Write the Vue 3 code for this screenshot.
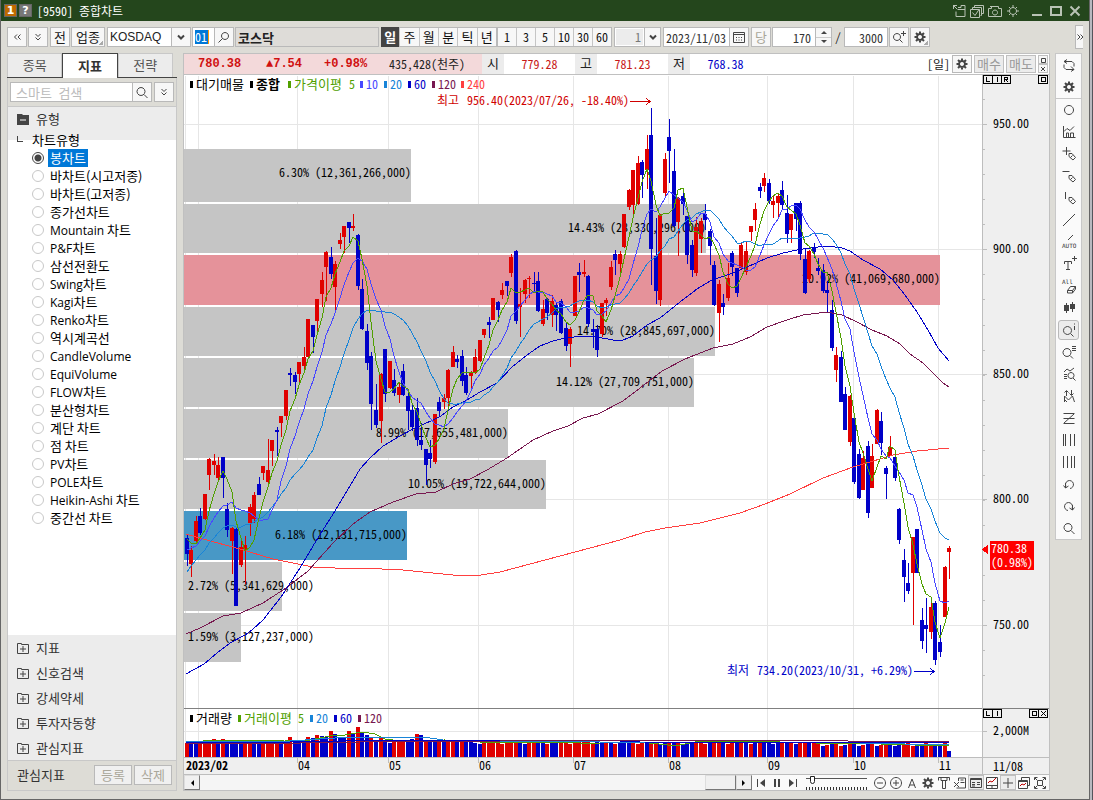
<script setup>
import { ref } from 'vue'

const chartTypes = ['봉차트', '바차트(시고저종)', '바차트(고저종)', '종가선차트', 'Mountain 차트', 'P&F차트', '삼선전환도', 'Swing차트', 'Kagi차트', 'Renko차트', '역시계곡선', 'CandleVolume', 'EquiVolume', 'FLOW차트', '분산형차트', '계단 차트', '점 차트', 'PV차트', 'POLE차트', 'Heikin-Ashi 차트', '중간선 차트'].map((name) => {
  const [, latin, rest] = name.match(/^([A-Za-z&-]*)(.*)$/)
  return { name, latin, rest }
})
const selected = ref('봉차트')
const groups = ['지표', '신호검색', '강세약세', '투자자동향', '관심지표']
const periods = ['일', '주', '월', '분', '틱', '년']
const minutes = ['1', '3', '5', '10', '30', '60']
const code = ref('01')
const stock = ref('코스닥')
const unit = ref('1')
const date = ref('2023/11/03')
const count = ref('170')
const total = ref('3000')
const keyword = ref('')
const zoomLevel = ref(8)
const quotes = [
  { label: '시', value: '779.28', tone: 'up' },
  { label: '고', value: '781.23', tone: 'up' },
  { label: '저', value: '768.38', tone: 'down' },
]

// Icons on a 16 x 16 grid: d is stroked, f is filled
const gear = { d: 'M8 5a3 3 0 1 0 .01 0M8 2.5v2M8 11.5v2M2.5 8h2M11.5 8h2M4 4l1.5 1.5M10.5 10.5L12 12M4 12l1.5-1.5M10.5 5.5L12 4', w: 2 }
const lens = 'M7 3.5a4 4 0 1 0 .01 0M10 10.5l3.5 3.5'
const pencil = 'M8 7.5h3l3.500 4-2.500 2.500-4-3.500zM11.500 9.500l-2 2'
const titleIcons = [
  { name: '창 이동', d: 'M2.5 2.5l4 4M2 2.5h4M2.5 2v4M7 4.5h3v-2h4v11h-9v-5M7 6.5h7' },
  { name: '창 복사', d: 'M5.5 4v-1.5h9v8h-2M3.5 6v-1.5h9v8h-1M1.5 6.5h9v8h-9zM3.5 9.5l2.5 3 4-6' },
  { name: '화면 저장', d: 'M1.5 5.5h3v-2h7v2h3v8h-13zM8 7a2.5 2.5 0 1 0 .01 0M3 3.5h2' },
  { name: '설정', d: 'M8 4.5a3.5 3.5 0 1 0 .01 0M8 2v2.5M8 11.5v2.5M2 8h2.5M11.5 8h2.5M4 4l1.5 1.5M10.5 10.5L12 12M4 12l1.5-1.5M10.5 5.5L12 4' },
]
const rail = [
  { name: '새로고침', d: 'M6 2.5l-3 2 3 2M3 4.5h8l2 2v3M10 9.5l3 3-3 2M13 12.5h-8l-2-2v-3' },
  { name: '환경설정', ...gear },
  { name: '원', d: 'M8 3.5a4.500 4.500 0 1 0 .01 0' },
  { name: '차트비교', d: 'M2.500 2v11.500h12M5.500 13v-4h2v4M9.500 13v-4h3v4M3 7.500l3-3 3 2 4-4' },
  { name: '추가', d: 'M5.500 1v8M1.500 5h8' + pencil },
  { name: '수평선', d: 'M1.500 3.500h7' + pencil },
  { name: '수직선', d: 'M4.500 2v7' + pencil },
  { name: '추세선', d: 'M2 14L14 2' },
  { name: '자동추세선', d: 'M7 6L12 1', t: 'AUTO', ty: 14, tx: 1 },
  { name: '문자', d: 'M3.500 8v-2.500h7v2.500M7 5.500v8.500M5 13.500h4M13.500 0v5M11 2.500h5' },
  { name: '모두 지우기', d: 'M6.500 12.500l3-4h5l-3 4zM6.500 12.500v2.500h5l3-4v-2.500M11.500 12.500v2.500', t: 'All', ty: 6, tx: 1 },
  { name: '봉 모양', d: 'M5.500 3v10M11.500 2v10', f: 'M3 5h5v6h-5zM9 4h5v5h-5z' },
  { name: '정보 보기', d: 'M6.500 4.500a4 4 0 1 0 .01 0M9.500 11.500l3 3M13.500 4v4M13.500 1.500v1', on: true },
  { name: '목록 보기', d: 'M6 4.500a4 4 0 1 0 .01 0M9 11.500l3 3M11 2.500h4M11 4.500h4M11 6.500h4' },
  { name: '차트 찾기', d: 'M3 6l3-3 3 2 4-3M3 8.500h3M3 10.500h3M3 12.500h3M10 6.500a3 3 0 1 0 .01 0M12 12l2.500 2.500' },
  { name: '패턴', d: 'M5.500 8v-5M3.500 4.500l2-2 2 2M10.500 2v5M8.500 5.500l2 2 2-2M3.500 14v-6l4 4 4-4 2 6M3 11l3 3' },
  { name: '갭', d: 'M2.500 3.500h11M2.500 8.500h11M2.500 13.500h11M13 4L3 13' },
  { name: '세로 격자', d: 'M2.500 2v12M4.500 2v12M9.500 2v12M13.500 2v12' },
  { name: '등간격', d: 'M2.500 2v12M6.500 2v12M10.500 2v12M13.500 2v12' },
  { name: '되돌리기', d: 'M5 10.500a4 4 0 1 1 4 2M4.500 7v5M2.500 9.500l2 2.500 3-2' },
  { name: '다시하기', d: 'M11 10.500a4 4 0 1 0-4 2M11.500 7v5M13.500 9.500l-2 2.500-3-2' },
  { name: '확대', d: lens },
]
const bottomTools = [
  { name: '축소', d: 'M8 2.500a5.500 5.500 0 1 0 .01 0M5 8h6' },
  { name: '확대', d: 'M8 2.500a5.500 5.500 0 1 0 .01 0M5 8h6M8 5v6' },
  { name: '글자 크기', d: 'M4.500 13l3.500-9 3.500 9M5.500 10h5' },
  { name: '차트 설정', ...gear },
  { name: '도구', d: 'M2.500 5.500v-3h11v3M5 2.500v3h6v-3M6.500 6v7.500h3v-7.500' },
  { name: '보내기', d: 'M6.500 6v-3h7v10h-9M8.500 5h3M8.500 7.500h4M2 7l5 5M7 7l-5 5' },
  { name: '데이터 창', d: 'M2.500 3.500h11v9h-11zM2 4.500h12M4 7.500h3M4 9.500h3M9 7.500h3M9 9.500h3M4 11h3', on: true },
  { name: '차트 배치', d: 'M2.500 2.500h11v11h-11zM2.500 10.500h11M8 10v3', r: 'M4 8l2-2 2 1 4-4' },
  { name: '십자선', d: 'M8 3v10M3 8h10', on: true },
  { name: '복제', d: 'M5.500 5v-2.500h8v8h-2M2.500 5.500h9v8h-9zM3 6.500h8', r: 'M4 11l2-2 2 1 2-2' },
  { name: '전체화면', d: 'M2.500 5v-2.500h3M10.500 2.500h3v2.500M13.500 11v2.500h-3M5.500 13.500h-3v-2.500M5.500 5.500h5v5h-5zM3 3l2 2M13 3l-2 2M3 13l2-2M13 13l-2-2' },
]

// Candles: direction, high, body top, body bottom, low
const candles = `B 535 538 554 566|R 546 550 564 577|R 516 521 541 542|B 508 516 533 535|R 494 494 519 520|R 458 459 475 490|R 454 461 465 475|R 457 465 478 481|B 457 457 478 498|B 503 509 530 537|R 527 528 541 574|B 528 529 606 606|R 539 547 565 567|R 536 545 549 584|R 504 507 523 536|R 492 495 519 523|B 477 484 495 495|R 466 466 473 480|R 439 470 482 485|R 440 440 451 466|B 427 430 432 456|R 416 416 423 437|R 390 390 416 420|B 368 373 375 386|B 372 375 382 394|R 362 362 374 382|R 347 357 366 371|R 319 319 357 357|B 325 325 337 353|R 299 299 321 332|R 272 280 294 307|R 251 252 267 301|B 247 257 274 279|R 261 264 287 312|R 233 240 244 249|R 226 226 237 253|B 222 222 228 243|R 214 226 228 231|B 234 235 286 290|B 279 289 329 330|B 324 331 363 370|B 352 356 404 430|B 384 410 425 428|R 373 374 421 443|B 349 349 394 402|R 361 361 388 389|B 369 380 393 396|R 382 387 395 403|B 364 371 395 396|B 391 396 411 430|B 403 410 427 431|B 398 408 440 446|B 423 440 445 450|B 449 449 465 485|B 440 453 459 468|R 414 414 462 464|B 397 402 411 416|R 394 398 402 409|R 369 370 398 411|R 346 352 367 367|B 355 359 362 368|B 350 356 381 386|B 367 375 393 395|R 371 372 376 389|R 349 357 373 374|R 340 340 361 362|R 329 329 335 338|B 317 322 325 338|R 298 298 320 320|B 301 302 310 322|R 283 290 295 299|B 281 281 286 296|R 254 257 273 277|B 250 251 321 324|R 288 304 307 337|R 279 280 294 303|R 276 278 279 298|B 272 283 284 291|B 272 281 311 312|R 300 309 324 326|B 298 299 313 320|R 295 301 315 327|B 303 305 315 331|B 299 301 333 334|B 323 328 346 351|R 327 329 344 367|R 276 276 316 316|B 263 272 275 292|R 260 272 274 277|B 275 276 324 327|B 319 329 332 348|B 325 329 350 357|R 303 303 334 337|R 298 300 303 316|R 261 267 287 290|B 250 254 260 275|R 251 254 264 273|R 214 214 247 248|R 189 190 207 210|R 170 170 205 215|R 156 163 204 205|B 160 162 175 198|R 135 149 170 189|B 108 135 249 285|B 218 256 291 304|R 214 215 300 306|R 153 159 193 197|B 119 137 151 183|B 149 171 226 227|R 197 198 222 256|B 191 196 204 215|B 216 216 255 264|B 240 245 270 277|R 217 227 273 276|R 218 221 239 253|B 204 214 220 230|B 229 231 246 265|B 261 265 305 306|R 280 284 313 342|B 294 303 307 315|R 263 278 298 301|B 251 253 267 276|B 268 268 293 297|R 243 245 268 269|R 242 251 272 275|R 226 226 232 241|R 203 209 220 231|B 183 187 191 198|R 173 178 186 192|B 179 183 201 204|R 195 201 205 218|R 194 196 203 219|B 181 190 205 209|B 195 213 234 243|R 214 214 230 243|B 203 203 219 231|B 201 203 254 260|B 249 259 293 294|R 250 251 279 283|B 243 247 252 258|B 258 268 271 275|B 264 270 291 293|B 281 290 293 312|B 300 310 348 351|R 347 355 370 382|B 351 357 402 402|B 387 394 430 430|R 395 396 442 446|B 418 418 482 484|B 449 454 498 499|R 451 458 490 490|B 441 446 513 518|R 444 456 488 488|R 409 410 444 444|B 412 421 443 455|B 466 468 474 499|R 436 447 456 456|B 453 457 478 481|B 508 509 540 544|B 549 560 577 602|B 563 583 591 594|R 537 537 573 625|B 529 529 573 573|B 608 620 641 649|B 598 625 629 653|R 600 607 632 639|B 601 603 660 665|B 625 642 652 657|R 566 567 617 617|R 546 548 552 579`
  .split('|')
  .map((row, i) => {
    const [dir, high, top, bottom, low] = row.split(' ')
    return { x: Math.round(184.5 + i * 4.512), up: dir === 'R', high: +high, top: +top, bottom: +bottom, low: +low }
  })

const closes = candles.map((c) => (c.up ? c.top : c.bottom))

// Moving average; head holds the values before the first full window
function average(n, head) {
  return closes
    .map((_, i) => {
      const y = i < head.length ? head[i] : closes.slice(i - n + 1, i + 1).reduce((a, b) => a + b, 0) / n
      return `${candles[i].x + 2},${Math.round(y)}`
    })
    .join(' ')
}

const lines = [
  { tone: 'ma240', points: '186,534 203,539 240,549 273,559 313,567 335,568 360,568 403,570 453,575 475,576 500,572 530,564 560,556 590,548 620,540 645,532 665,528 700,523 740,513 765,504 790,494 823,478 853,467 870,462 893,455 917,451 949,448' },
  { tone: 'ma120', points: '186,634 200,628 223,616 241,613 263,603 286,588 308,571 333,543 353,524 370,512 393,502 416,494 436,492 453,484 470,479 487,470 507,458 533,440 553,431 568,426 583,418 598,414 623,401 640,388 662,371 685,359 713,348 733,344 750,337 767,327 787,320 803,315 827,312 842,315 857,322 872,330 887,336 900,344 910,354 923,363 933,373 943,383 949,387' },
  { tone: 'ma60', points: '186,674 204,664 217,653 230,643 245,635 252,630 263,620 281,597 300,568 316,541 335,511 360,469 370,458 383,446 400,436 413,429 433,420 441,416 453,407 467,400 480,392 497,383 512,367 527,355 540,346 553,341 565,338 583,336 597,337 613,340 623,340 633,336 647,325 660,318 680,302 697,289 712,280 730,274 747,267 767,258 783,253 797,250 810,248 827,246 842,248 850,251 863,260 880,269 893,280 905,295 917,312 928,330 938,348 949,361' },
  { tone: 'ma20', points: average(20, [572, 566, 560, 555, 550, 543, 538, 533, 528, 526, 525, 527, 527, 525, 524, 522, 519, 517, 512]) },
  { tone: 'ma10', points: average(10, [550, 548, 546, 541, 536, 527, 518, 512, 506]) },
  { tone: 'ma5', points: average(5, [539, 543, 544, 538]) },
]

const profile = [
  { y: 149, h: 53, end: 411, label: '6.30% (12,361,266,000)' },
  { y: 204, h: 49, end: 706, label: '14.43% (28,330,296,000)' },
  { y: 255, h: 50, end: 940, label: '20.92% (41,069,680,000)', tone: 'peak' },
  { y: 307, h: 49, end: 715, label: '14.70% (28,845,697,000)' },
  { y: 358, h: 49, end: 694, label: '14.12% (27,709,751,000)' },
  { y: 409, h: 49, end: 508, label: '8.99% (17,655,481,000)' },
  { y: 460, h: 49, end: 546, label: '10.05% (19,722,644,000)' },
  { y: 511, h: 49, end: 407, label: '6.18% (12,131,715,000)', tone: 'current' },
  { y: 562, h: 49, end: 282, text: 314, label: '2.72% (5,341,629,000)' },
  { y: 613, h: 49, end: 241, text: 314, label: '1.59% (3,127,237,000)' },
]

const months = [
  { x: 297, t: '04' }, { x: 388, t: '05' }, { x: 478, t: '06' }, { x: 573, t: '07' },
  { x: 668, t: '08' }, { x: 767, t: '09' }, { x: 853, t: '10' }, { x: 938, t: '11' },
]
const prices = [
  { y: 124, t: '950.00' }, { y: 249, t: '900.00' }, { y: 374, t: '850.00' }, { y: 499, t: '800.00' }, { y: 625, t: '750.00' },
]
const minorTicks = Array.from({ length: 24 }, (_, i) => Math.round(99 + i * 25.06))

const legend = [
  { x: 190, t: '대기매물', tone: 'ink' }, { x: 250, t: '종합', tone: 'ink', bold: true },
  { x: 288, t: '가격이평', n: '5', nx: 349, tone: 'ma5' },
  { x: 360, n: '10', tone: 'ma10' }, { x: 384, n: '20', tone: 'ma20' }, { x: 408, n: '60', tone: 'ma60' },
  { x: 432, n: '120', tone: 'ma120' }, { x: 461, n: '240', tone: 'ma240' },
]
const volumeLegend = [
  { x: 190, t: '거래량', tone: 'ink' }, { x: 238, t: '거래이평', n: '5', nx: 298, tone: 'ma5' }, { x: 310, n: '20', tone: 'ma20' },
  { x: 334, n: '60', tone: 'ma60' }, { x: 358, n: '120', tone: 'ma120' },
]

const volumeColors = 'RBBRRRRBRBBBBRRBBRRRRBRRBBBRBRBBRBBBRBRBBRBRBBRRRBBRBRBBRBRRBRBBBBRRRRRRRRBBRRBBRBBRRRRRRRRBBRBRBBBRRRBRRBBRBRBBBRRRBRRBRRBRBRBRBBBBRBRBRRBRRBRBRRBRBBRBRBRRBBBRRRBBRRBBRBRB'
const volumeTops = [743, 744, 743, 743, 743, 744, 739, 740, 739, 742, 743, 743, 743, 743, 744, 743, 743, 743, 743, 740, 742, 742, 741, 737, 741, 742, 742, 737, 738, 735, 736, 737, 731, 734, 737, 737, 731, 733, 727, 732, 735, 737, 740, 738, 741, 743, 740, 740, 740, 742, 739, 734, 735, 740, 740, 740, 740, 740, 741, 741, 741, 741, 740, 741, 743, 744]
const volumes = candles.map((c, i) => {
  let top = volumeTops[i] ?? 742 + ((i * 7) % 5 === 0 ? 2 : 0)
  if (i > 140) top = 743 + ((i * 3) % 4)
  if (i === 169) top = 751
  return { x: c.x, up: volumeColors[i % volumeColors.length] === 'R', top }
})
const volumeLines = [
  { tone: 'ma5', points: '186,742 220,740 240,741 285,740 310,740 330,736 345,735 362,732 375,734 385,739 400,741 445,740 480,742 570,742 580,743 600,743 640,742 668,745 680,745 700,741 730,741 780,742 815,743 880,744 949,746' },
  { tone: 'ma20', points: '186,741 290,741 320,739 350,737 410,737 430,738 450,741 600,742 660,743 740,742 860,743 949,745' },
  { tone: 'ma60', points: '186,742 290,742 340,741 370,740 600,740 640,742 949,743' },
  { tone: 'ma120', points: '186,743 300,743 360,742 500,741 600,740 848,741 949,742' },
]
</script>

<template>
  <div class="desk">
    <main class="window">
      <header class="titlebar">
        <span class="chip chip-num">1</span>
        <button class="chip chip-help" aria-label="도움말">?</button>
        <h1>[9590] 종합차트</h1>
        <div class="title-tools">
          <button v-for="icon in titleIcons" :key="icon.name" :aria-label="icon.name">
            <svg viewBox="0 0 16 16" width="16" height="16"><path :d="icon.d" /></svg>
          </button>
          <button class="win first" aria-label="최소화"><svg viewBox="0 0 16 16" width="16" height="16"><path d="M3 12h10" class="w2" /></svg></button>
          <button class="win" aria-label="최대화"><svg viewBox="0 0 16 16" width="16" height="16"><path d="M3 4h10v8h-10z" class="w2" /></svg></button>
          <button class="win" aria-label="닫기"><svg viewBox="0 0 16 16" width="16" height="16"><path d="M3.500 3.500l9 9M12.500 3.500l-9 9" class="w2" /></svg></button>
        </div>
      </header>

      <div class="toolbar">
        <button class="tb sq" aria-label="이전"><svg viewBox="0 0 16 16" width="16" height="16"><path d="M8 5.500l-2.500 2.500 2.500 2.500M11.500 5.500l-2.500 2.500 2.500 2.500" /></svg></button>
        <button class="tb sq" aria-label="펼치기"><svg viewBox="0 0 16 16" width="16" height="16"><path d="M5.500 5l2.500 2.500 2.500-2.500M5.500 8.500l2.500 2.500 2.500-2.500" /></svg></button>
        <button class="tb sq gap1 ko">전</button>
        <button class="tb wide corner ko">업종</button>
        <label class="combo market">
          <select aria-label="시장"><option>KOSDAQ</option></select>
          <span class="drop"><svg viewBox="0 0 16 16" width="16" height="16"><path d="M5 6.500l3 3 3-3" class="w2" /></svg></span>
        </label>
        <label class="field code"><span class="hl"><input v-model="code" aria-label="종목코드" /></span></label>
        <button class="tb sq join" aria-label="종목 찾기"><svg viewBox="0 0 16 16" width="16" height="16"><path d="M9 3.500a3.500 3.500 0 1 0 .01 0M6.500 9.500l-4 4" /></svg></button>
        <input v-model="stock" class="tf name" aria-label="종목명" />
        <div class="seg periods ko">
          <button v-for="(p, i) in periods" :key="p" :class="{ on: i === 0 }">{{ p }}</button>
        </div>
        <div class="seg minutes">
          <button v-for="m in minutes" :key="m">{{ m }}</button>
        </div>
        <label class="combo unit">
          <input v-model="unit" aria-label="주기" />
          <span class="drop"><svg viewBox="0 0 16 16" width="16" height="16"><path d="M5 6.500l3 3 3-3" class="w2" /></svg></span>
        </label>
        <input v-model="date" class="tf date" aria-label="조회일" />
        <button class="tb sq join" aria-label="달력"><svg viewBox="0 0 16 16" width="16" height="16"><path d="M2.500 3.500h11v10h-11zM2 5.500h12M5 8.500h1M7.500 8.500h1M10 8.500h1M5 11h1M7.500 11h1M10 11h1" /></svg></button>
        <button class="tb sq dim gap1 ko">당</button>
        <input v-model="count" class="tf num" aria-label="표시 개수" />
        <span class="spin">
          <button aria-label="늘리기"><svg viewBox="0 0 8 4" width="8" height="4"><path d="M1 4l3-3 3 3z" /></svg></button>
          <button aria-label="줄이기"><svg viewBox="0 0 8 4" width="8" height="4"><path d="M1 0l3 3 3-3z" /></svg></button>
        </span>
        <span class="slash">/</span>
        <input v-model="total" class="tf num" aria-label="전체 개수" />
        <button class="tb sq gap1" aria-label="조회"><svg viewBox="0 0 16 16" width="16" height="16"><path d="M6 4.500a3.500 3.500 0 1 0 .01 0M8.500 10.500l3 3M12.500 2v5M10 4.500h5" /></svg></button>
        <button class="tb sq corner" aria-label="차트 설정"><svg viewBox="0 0 16 16" width="16" height="16"><path :d="gear.d" class="w2" /></svg></button>
        <button class="more" aria-label="더보기"><svg viewBox="0 0 8 16" width="8" height="16"><path d="M1.500 5.500l2.500 2.500-2.500 2.500M4.500 5.500l2.500 2.500-2.500 2.500" /></svg></button>
      </div>

      <div class="content">
        <aside class="side">
          <nav class="tabs ko">
            <button>종목</button><button class="on">지표</button><button>전략</button>
          </nav>
          <div class="panel">
            <div class="search">
              <input v-model="keyword" placeholder="스마트 검색" aria-label="스마트 검색" />
              <button class="tb sq join" aria-label="검색"><svg viewBox="0 0 16 16" width="16" height="16"><path :d="lens" /></svg></button>
              <button class="tb sq" aria-label="펼치기"><svg viewBox="0 0 16 16" width="16" height="16"><path d="M5.500 5l2.500 2.500 2.500-2.500M5.500 8.500l2.500 2.500 2.500-2.500" /></svg></button>
            </div>
            <button class="group open ko">
              <svg viewBox="0 0 12 12" width="12" height="12"><path d="M0 1h5l1 1h6v10h-12z" class="solid" /><path d="M3 7h6" class="minus" /></svg>
              유형
            </button>
            <fieldset class="tree">
              <legend>차트유형</legend>
              <label v-for="t in chartTypes" :key="t.name">
                <input v-model="selected" type="radio" name="chart-type" :value="t.name" />
                <span class="item"><span v-if="t.latin" class="latin">{{ t.latin }}</span>{{ t.rest }}</span>
              </label>
            </fieldset>
            <button v-for="g in groups" :key="g" class="group ko">
              <svg viewBox="0 0 12 12" width="12" height="12"><path d="M.5 1.500h4v1h7v9h-11zM3 7h6M6 4v6" /></svg>
              {{ g }}
            </button>
            <footer class="ko">
              <span>관심지표</span>
              <button>등록</button>
              <button>삭제</button>
            </footer>
          </div>
        </aside>

        <section class="chart">
          <div class="info">
            <div class="now">
              <b class="last">780.38</b><b class="diff">▲7.54</b><b class="rate">+0.98%</b><span class="vol">435,428(천주)</span>
            </div>
            <template v-for="q in quotes" :key="q.label">
              <span class="qlabel ko">{{ q.label }}</span>
              <span class="qvalue" :class="q.tone">{{ q.value }}</span>
            </template>
            <span class="cycle">[일]</span>
            <button class="tb sq" aria-label="정보 설정"><svg viewBox="0 0 16 16" width="16" height="16"><path :d="gear.d" class="w2" /></svg></button>
            <button class="trade ko">매수</button>
            <button class="trade ko">매도</button>
            <span class="mini">
              <button aria-label="창 크기"><svg viewBox="0 0 8 8" width="8" height="8"><path d="M2.500 2.500h4v4h-4z" /></svg></button>
              <button aria-label="창 닫기"><svg viewBox="0 0 8 8" width="8" height="8"><path d="M2 2l4 4M6 2l-4 4" /></svg></button>
            </span>
          </div>

          <svg class="plot" viewBox="184 75 865 700" preserveAspectRatio="xMinYMin meet" role="img" aria-label="코스닥 일봉 차트">
            <rect x="983" y="75" width="66" height="700" class="axis" />
            <rect x="184" y="758" width="865" height="17" class="axis" />
            <g class="grid">
              <path d="M185.500 76V757M198.500 76V757" />
              <path v-for="m in months" :key="m.t" :d="`M${m.x + 0.5} 76V757`" />
              <path v-for="p in prices" :key="p.t" :d="`M184 ${p.y + 0.5}H982`" />
              <path d="M184 731.500H982" />
            </g>
            <rect v-for="p in profile" :key="p.y" x="184" :y="p.y" :width="p.end - 184" :height="p.h" :class="['bar', p.tone]" />
            <text v-for="p in profile" :key="p.label" :x="p.text || p.end" :y="p.y + 28" text-anchor="end">{{ p.label }}</text>

            <g v-for="(c, i) in candles" :key="i" :class="c.up ? 'up' : 'down'">
              <rect :x="c.x + 2" :y="c.high" width="1" :height="c.low - c.high" />
              <rect :x="c.x" :y="c.top" width="4" :height="Math.max(1, c.bottom - c.top)" />
            </g>
            <polyline v-for="l in lines" :key="l.tone" :points="l.points" :class="['line', l.tone]" />

            <g v-for="l in legend" :key="l.x" :class="['key', l.tone]">
              <rect :x="l.x" y="81" width="3" height="7" />
              <text v-if="l.t" :x="l.x + 6" y="89" :class="['ko', { bold: l.bold }]">{{ l.t }}</text>
              <text v-if="l.n" :x="l.nx || l.x + 6" y="89">{{ l.n }}</text>
            </g>
            <g class="note high">
              <text x="437" y="105">최고</text>
              <text x="629" y="105" text-anchor="end">956.40(2023/07/26, -18.40%)</text>
              <path d="M630 101.500h20M646 98l4 3.500-4 3.500" />
            </g>
            <g class="note low">
              <text x="727" y="675">최저</text>
              <text x="913" y="675" text-anchor="end">734.20(2023/10/31, +6.29%)</text>
              <path d="M914 671.500h20M930 668l4 3.500-4 3.500" />
            </g>

            <path d="M184 708.500H1049" class="split" />
            <g v-for="l in volumeLegend" :key="l.x" :class="['key', l.tone]">
              <rect :x="l.x" y="715" width="3" height="7" />
              <text v-if="l.t" :x="l.x + 6" y="723" class="ko">{{ l.t }}</text>
              <text v-if="l.n" :x="l.nx || l.x + 6" y="723">{{ l.n }}</text>
            </g>
            <rect v-for="(v, i) in volumes" :key="i" :x="v.x" :y="v.top" width="4" :height="757 - v.top" :class="v.up ? 'up' : 'down'" />
            <polyline v-for="l in volumeLines" :key="l.tone" :points="l.points" :class="['line', l.tone]" />

            <path d="M184 757.500H1049M184 774.500H1049M982.500 75V775" class="frame" />
            <path v-for="m in months" :key="m.t" :d="`M${m.x + 0.5} 758v5`" class="frame" />
            <path v-for="y in minorTicks" :key="y" :d="`M983 ${y + 0.5}h2`" class="frame" />
            <text x="186" y="770" class="bold">2023/02</text>
            <text v-for="m in months" :key="m.t" :x="m.x + 1" y="770">{{ m.t }}</text>
            <text x="993" y="771">11/08</text>
            <g v-for="p in prices" :key="p.t">
              <path :d="`M983 ${p.y + 0.5}h4`" class="frame" />
              <text x="993" :y="p.y + 4">{{ p.t }}</text>
            </g>
            <path d="M983 731.500h4" class="frame" />
            <text x="993" y="735">2,000M</text>

            <path d="M982 549.500l6-5v10z" class="tag" />
            <rect x="990" y="541" width="44" height="29" class="tag" />
            <text x="991" y="553" class="tag-text">780.38</text>
            <text x="991" y="567" class="tag-text">(0.98%)</text>

            <g class="boxes">
              <path d="M983.500 75.500h27v8h-27zM992.500 75v8M1001.500 75v8M1038.500 75.500h9v8h-9zM1041.500 77.500h4v4h-4z" />
              <path d="M983.500 709.500h18v8h-18zM992.500 709v8M1029.500 709.500h18v8h-18zM1038.500 709v8M1032.500 711.500h4v4h-4zM1041 711l5 5M1046 711l-5 5" />
              <path d="M986.500 77v4.500h3M997.500 77v5M1004.500 82v-4.500h3v2h-3M1006 79.500l2 2.500" />
              <path d="M986.500 711v4.500h3M997.500 711v5" />
            </g>
          </svg>

          <div class="scroll">
            <button class="arrow" aria-label="왼쪽"><svg viewBox="0 0 8 8" width="8" height="8"><path d="M6 1v6l-3-3z" /></svg></button>
            <div class="track"><div class="thumb"></div></div>
            <button class="arrow" aria-label="오른쪽"><svg viewBox="0 0 8 8" width="8" height="8"><path d="M2 1v6l3-3z" /></svg></button>
            <div class="play">
              <button aria-label="처음"><svg viewBox="0 0 16 16" width="16" height="16"><path d="M4.500 4v8" /><path d="M12 4v8l-5-4z" class="solid" /></svg></button>
              <button aria-label="일시정지"><svg viewBox="0 0 16 16" width="16" height="16"><path d="M5 4h2v8h-2zM9 4h2v8h-2z" class="solid" /></svg></button>
              <button aria-label="끝"><svg viewBox="0 0 16 16" width="16" height="16"><path d="M11.500 4v8" /><path d="M4 4v8l5-4z" class="solid" /></svg></button>
            </div>
            <input v-model="zoomLevel" class="slider" type="range" min="0" max="100" aria-label="차트 간격" />
            <div class="tools">
              <button v-for="icon in bottomTools" :key="icon.name" :class="{ on: icon.on }" :aria-label="icon.name">
                <svg viewBox="0 0 16 16" width="16" height="16"><path :d="icon.d" :class="{ w2: icon.w }" /><path v-if="icon.r" :d="icon.r" class="red" /></svg>
              </button>
            </div>
          </div>
        </section>

        <nav class="rail">
          <button v-for="icon in rail" :key="icon.name" :class="{ on: icon.on }" :aria-label="icon.name">
            <svg viewBox="0 0 16 16" width="16" height="16">
              <path :d="icon.d" :class="{ w2: icon.w }" />
              <path v-if="icon.f" :d="icon.f" class="solid" />
              <text v-if="icon.t" :x="icon.tx" :y="icon.ty">{{ icon.t }}</text>
            </svg>
          </button>
        </nav>
      </div>
    </main>
  </div>
</template>

<style>
body {
  margin: 0;
  background: #f4f4f4;
}
</style>

<style scoped>
.desk {
  --mono: "Noto Sans Mono CJK KR", "Noto Sans CJK KR", monospace;
  --sans: "Noto Sans CJK KR", sans-serif;
  box-sizing: border-box;
  display: flex;
  min-height: 100vh;
  padding-bottom: 2px;
  border-right: 1px solid #55555c;
  background: #f4f4f4;
  font: 12px/16px var(--mono);
  color: #222;
}
.desk * { box-sizing: border-box; }
button, input, select { margin: 0; padding: 0; font: inherit; color: inherit; }
button { display: flex; align-items: center; justify-content: center; border: 0; background: none; white-space: nowrap; }
svg { display: block; flex: none; }
.ko { font-size: 13px; }
button path, .drop path { fill: none; stroke: #444; stroke-width: 1; }
button .w2, .drop .w2 { stroke-width: 2; }
button .solid { fill: #444; stroke: none; }
.window {
  flex: 1;
  min-width: 0;
  display: flex;
  flex-direction: column;
  border: solid #666;
  border-width: 0 1px 1px;
  margin-right: 2px;
  background: #dddcd6;
  box-shadow: 2px 0 #b9b9c0;
}
.titlebar {
  display: flex;
  align-items: center;
  height: 21px;
  padding: 0 6px 0 3px;
  background: #24461c;
  color: #fff;
}
.chip { width: 13px; height: 13px; margin-right: 2px; border: 1px solid #666; background: #777; font: bold 11px/11px "DejaVu Sans", sans-serif; text-align: center; color: #fff; }
.chip-num { background: #c06a00; }
h1 { margin: 0 0 0 3px; font: inherit; }
.title-tools { display: flex; gap: 2px; margin-left: auto; }
.title-tools path { stroke: #b9c3b5; }
.title-tools .win { margin-left: 1px; }
.title-tools .first { margin-left: 6px; }

.toolbar { display: flex; align-items: center; height: 32px; padding-left: 6px; }
.tb { height: 20px; border: 1px solid #b9b9b9; background: #f7f7f7; position: relative; flex: none; }
.sq { width: 20px; margin-right: 1px; }
.gap1 { margin-left: 1px; }
.toolbar .wide { width: 34px; margin-right: 2px; }
.dim { color: #a9a698; }
.corner::after { content: ""; position: absolute; right: 1px; bottom: 1px; width: 4px; height: 4px; background: linear-gradient(135deg, transparent 50%, #aaa 50%); }
.combo { display: flex; height: 20px; border: 1px solid #b9b9b9; background: #fff; flex: none; }
.combo select, .combo input { flex: 1; min-width: 0; border: 0; padding-left: 2px; background: #fff; appearance: none; outline: 0; border-radius: 0; }
.combo select { font: 12px "Liberation Sans", sans-serif; }
.drop { width: 19px; border-left: 1px solid #b9b9b9; display: flex; align-items: center; justify-content: center; background: #f7f7f7; }
.market { width: 84px; margin-right: 1px; }
.unit { width: 47px; margin: 0 2px; }
.unit input { background: #ececec; border: 1px solid #fff; text-align: right; padding-right: 2px; color: #777; }
.unit .drop { width: 16px; }
.field { width: 23px; height: 20px; border: 1px solid #b9b9b9; background: #fff; padding: 2px; flex: none; }
.hl { display: block; width: 14px; height: 14px; background: #0078d7; border-right: 1px solid #f90; }
.hl input { display: block; width: 100%; height: 14px; border: 0; background: none; color: #fff; outline: 0; }
.join { margin-left: -1px; }
.tf { height: 20px; border: 1px solid #b9b9b9; background: #fff; outline: 0; flex: none; color: #333; }
.name { width: 144px; padding-left: 2px; margin-right: 2px; background: #dedcd8; font: bold 13px var(--mono); color: #222; }
.date { width: 67px; padding-left: 2px; }
.num { width: 44px; padding-right: 4px; text-align: right; }
.seg { display: flex; height: 20px; border: 1px solid #b9b9b9; background: #f7f7f7; flex: none; }
.seg button { flex: 1; color: #111; }
.seg button + button { border-left: 1px solid #c5c5c5; }
.seg .on { background: #444; color: #fff; font-weight: bold; margin: -1px 0 -1px -1px; }
.periods { width: 116px; }
.minutes { width: 115px; }
.spin { display: flex; flex-direction: column; width: 16px; height: 20px; border: 1px solid #b9b9b9; border-left: 0; background: #f7f7f7; flex: none; }
.spin button { flex: 1; }
.spin button + button { border-top: 1px solid #ccc; }
.spin path { fill: #444; stroke: none; }
.slash { width: 12px; text-align: center; }
.more { width: 8px; height: 24px; margin: 0 6px 0 auto; border: 1px solid #b9b9b9; border-right: 0; background: #f7f7f7; }

.content { flex: 1; display: flex; padding: 0 7px 8px 6px; min-height: 0; }
.side { width: 170px; margin-right: 6px; display: flex; flex-direction: column; flex: none; color: #333; }
.tabs { display: flex; height: 25px; border-bottom: 1px solid #444; padding-right: 4px; }
.tabs button { flex: 1; border: 1px solid #c8c8c8; border-bottom: 0; background: #ececec; color: #555; padding-bottom: 1px; }
.tabs .on { border-color: #444; background: #fff; margin-bottom: -1px; font-weight: bold; color: #333; }
.panel { flex: 1; display: flex; flex-direction: column; border: 1px solid #c8c8c8; border-top: 0; background: #ececec; }
.search { display: flex; height: 28px; padding: 4px 2px 0; background: #dddcd6; }
.search input { flex: 1; min-width: 0; height: 20px; border: 1px solid #b9b9b9; padding-left: 5px; background: #fff; outline: 0; font-size: 13px; }
.search input::placeholder { color: #bbb; opacity: 1; }
.search .sq { margin-right: 2px; }
.search .sq:last-child { margin-right: 0; }
.group { height: 25px; justify-content: flex-start; gap: 7px; padding-left: 9px; color: #333; flex: none; }
.group.open { border-top: 1px solid #c8c8c8; }
.group .minus { stroke: #fff; stroke-width: 1; }
.tree { flex: 1; margin: 0; padding: 0; border: 0; background: #fff; font: 13px/18px var(--sans); color: #000; min-width: 0; }
.tree legend { padding: 0 0 0 24px; height: 18px; line-height: 18px; position: relative; }
.tree legend::before { content: ""; position: absolute; left: 9px; top: 5px; width: 5px; height: 5px; border: solid #444; border-width: 0 0 1px 1px; }
.tree label { display: flex; align-items: center; height: 18px; padding-left: 24px; gap: 4px; }
.tree input { appearance: none; width: 12px; height: 12px; border: 1px solid #c8c8c8; border-radius: 50%; background: #fff; flex: none; }
.tree input:checked { border-color: #444; background: radial-gradient(#444 0 3px, #fff 4px); }
.item { padding: 0 2px; white-space: pre; }
.latin { font: 12px/16px "Open Sans", sans-serif; }
.tree input:checked + .item { background: #0078d7; color: #fff; }
.panel footer { display: flex; align-items: center; height: 30px; border-top: 1px solid #c8c8c8; padding: 0 4px 1px 9px; gap: 2px; background: #dddcd6; }
.panel footer span { flex: 1; }
.panel footer button { width: 38px; height: 20px; border: 1px solid #b9b9b9; background: #f0f0f0; color: #aaa79a; }

.chart { flex: 1; min-width: 0; display: flex; flex-direction: column; border: 1px solid #c0c0c0; background: #fff; }
.info { display: flex; align-items: center; height: 21px; border-bottom: 1px solid #c0c0c0; }
.now { display: flex; align-items: center; align-self: stretch; width: 298px; background: #f3d9da; flex: none; }
.now b { font: bold 12px/16px "Liberation Mono", monospace; color: #d01010; }
.now .last { margin-left: 14px; width: 68px; }
.now .diff { width: 58px; }
.now .rate { width: 65px; }
.vol { color: #222; }
.qlabel { width: 22px; align-self: stretch; line-height: 18px; background: #ececec; text-align: center; flex: none; }
.qvalue { width: 71px; text-align: center; flex: none; }
.qvalue.up { color: #c81818; }
.qvalue.down { color: #0000c8; }
.cycle { margin: 0 2px 0 auto; }
.info .sq { height: 18px; margin-right: 2px; }
.trade { width: 30px; height: 18px; margin-right: 2px; border: 1px solid #c0c0c0; background: #ececec; color: #999; }
.mini { width: 10px; display: flex; flex-direction: column; margin-right: 1px; }
.mini button { height: 9px; border: 1px solid #c0c0c0; background: #f7f7f7; overflow: hidden; }

.plot { flex: 1; width: 100%; min-height: 0; font: 12px var(--mono); shape-rendering: crispEdges; background: #fff; }
.plot text { fill: #000; }
.plot .bold { font-weight: bold; }
.axis { fill: #efefef; }
.grid path { stroke: #e6e6e6; fill: none; }
.bar { fill: #c5c5c5; }
.bar.peak { fill: #e5929a; }
.bar.current { fill: #4898c6; }
.up rect, rect.up { fill: #e00000; }
.down rect, rect.down { fill: #0000c8; }
.line { fill: none; stroke: var(--tone); stroke-width: 1; }
.ink { --tone: #000; }
.ma5 { --tone: #50a000; }
.ma10 { --tone: #4848ff; }
.ma20 { --tone: #1884d8; }
.ma60 { --tone: #0000c8; }
.ma120 { --tone: #781850; }
.ma240 { --tone: #ff4040; }
.plot .key rect, .plot .key text { fill: var(--tone); }
.note path { fill: none; stroke: currentColor; }
.plot .note text { fill: currentColor; }
.high { color: #d00000; }
.low { color: #0000c8; }
.split { stroke: #808080; }
.frame { stroke: #bdbdbd; fill: none; }
.tag { fill: #f00; }
.plot .tag-text { fill: #fff; }
.boxes path { fill: none; stroke: #000; }

.scroll { display: flex; height: 15px; background: #fafafa; flex: none; }
.arrow { width: 16px; border: 1px solid; border-color: #ddd #777 #777 #ddd; background: #f0f0f0; }
.arrow path { fill: #000; stroke: none; }
.track { flex: 1; display: flex; justify-content: flex-end; background: #f5f5f5; }
.thumb { width: 31px; border: 1px solid; border-color: #ddd #777 #777 #ddd; background: #f0f0f0; }
.play { display: flex; margin-left: 1px; }
.slider { appearance: none; width: 61px; height: 15px; margin: 0 5px; background: linear-gradient(#555, #555) 0 3px / 100% 1px no-repeat, repeating-linear-gradient(90deg, #333 0 1px, transparent 1px 3px) 0 12px / 100% 3px no-repeat; outline: 0; }
.slider::-webkit-slider-thumb { appearance: none; width: 5px; height: 8px; margin-top: -5px; border: 1px solid #222; border-radius: 0 0 3px 3px; background: #fff; }
.tools { display: flex; margin-right: 1px; }
.tools button { width: 16px; }
.tools .on { box-shadow: inset 0 0 0 1px #c0c0c0; background: #ececec; }
.tools .red { stroke: #c00000; }

.rail { align-self: flex-start; width: 27px; margin-left: 5px; display: flex; flex-direction: column; border: 1px solid #c8c8c8; background: #fafafa; flex: none; }
.rail button { height: 22px; }
.rail button:nth-child(2) { height: 23px; border-bottom: 1px solid #c8c8c8; }
.rail .on { height: 20px; margin: 1px 2px; border: 1px solid #b9b9b9; border-radius: 3px; background: #ececec; }
.rail text { font: 6px "DejaVu Sans Mono", monospace; fill: #333; }
</style>
